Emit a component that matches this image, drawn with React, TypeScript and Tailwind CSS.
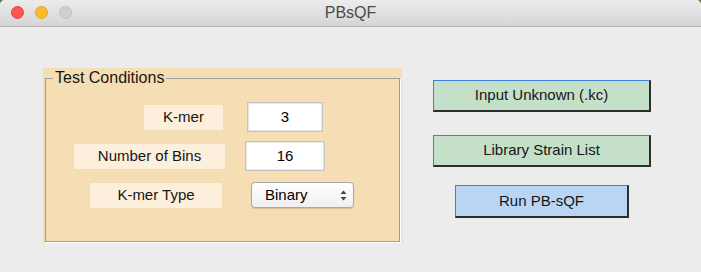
import React from "react";

const font = { fontFamily: '"Liberation Sans", Arial, sans-serif' };

function Light({ color }: { color: string }) {
  return <span className={`block w-[13px] h-[13px] rounded-full border ${color}`} />;
}

function Label({ text, w, ml }: { text: string; w: string; ml: string }) {
  return (
    <div className={`${w} ${ml} h-[25px] bg-[#fcefdc] flex items-center justify-center text-[15px] text-[#161616]`}>
      {text}
    </div>
  );
}

function Field({ value, w, ml }: { value: string; w: string; ml: string }) {
  return (
    <div
      className={`${w} ${ml} h-[30px] bg-white border border-[#c4c4c4] shadow-[inset_0_0_0_1px_#e6e6e6] flex items-center justify-center text-[15px] text-black`}
    >
      {value}
    </div>
  );
}

export default function App() {
  return (
    <div className="w-[701px] h-[272px] bg-[#5f7a4c]" style={font}>
      <div className="w-full h-full bg-[#ececec] rounded-t-[5px] flex flex-col overflow-hidden">
        {/* title bar */}
        <div className="h-[27px] shrink-0 relative bg-gradient-to-b from-[#ececec] to-[#d5d5d5] border-b border-[#b4b4b4] flex items-center justify-center">
          <div className="absolute left-[11px] top-[6px] flex gap-[11px]">
            <Light color="bg-[#fc5753] border-[#e2463f]" />
            <Light color="bg-[#fdbc2c] border-[#e0a22a]" />
            <Light color="bg-[#d0d0d0] border-[#c2c2c2]" />
          </div>
          <span className="text-[16px] text-[#4b4b4b]">PBsQF</span>
        </div>

        {/* body */}
        <div className="flex pl-[43px] pt-[41px]">
          <div className="w-[359px] h-[175px] bg-[#f5deb3] pt-[10px] px-[2px] pb-[1px]">
            <div className="relative h-full border border-[#9f9f9f] shadow-[1px_1px_0_#ffffff] pt-[23px] flex flex-col gap-[9px]">
              <span className="absolute -top-[10px] left-[7px] px-[2px] bg-[#f5deb3] text-[16px] leading-[18px] text-[#161616]">
                Test Conditions
              </span>
              <div className="h-[30px] flex items-center">
                <Label text="K-mer" w="w-[79px]" ml="ml-[98px]" />
                <Field value="3" w="w-[76px]" ml="ml-[24px]" />
              </div>
              <div className="h-[30px] flex items-center">
                <Label text="Number of Bins" w="w-[151px]" ml="ml-[28px]" />
                <Field value="16" w="w-[80px]" ml="ml-[20px]" />
              </div>
              <div className="h-[30px] flex items-center">
                <Label text="K-mer Type" w="w-[132px]" ml="ml-[44px]" />
                <div className="ml-[29px] w-[103px] h-[26px] rounded-[4px] border border-[#a8a8a8] bg-gradient-to-b from-[#ffffff] to-[#f0f0f0] shadow-[0_1px_1px_rgba(0,0,0,0.15)] flex items-center pl-[13px] pr-[6px] text-[15px] text-black">
                  <span className="flex-1">Binary</span>
                  <svg width="7" height="11" viewBox="0 0 7 11">
                    <path d="M3.5 0.5 L6.5 4 H0.5 Z" fill="#444" />
                    <path d="M3.5 10.5 L6.5 7 H0.5 Z" fill="#444" />
                  </svg>
                </div>
              </div>
            </div>
          </div>

          <div className="ml-[31px] mt-[12px] w-[218px] flex flex-col items-center text-[15px] text-[#161616]">
            <button className="w-[218px] h-[32px] bg-[#c4e0c8] border-t border-l border-[#3b7fe0] border-r-2 border-b-2 border-r-[#2d2d2d] border-b-[#2d2d2d]">
              Input Unknown (.kc)
            </button>
            <button className="mt-[23px] w-[218px] h-[32px] bg-[#c4e0c8] border-t border-l border-[#3b7fe0] border-r-2 border-b-2 border-r-[#2d2d2d] border-b-[#2d2d2d]">
              Library Strain List
            </button>
            <button className="mt-[18px] w-[174px] h-[33px] bg-[#bad5f3] border-t border-l border-[#3b7fe0] border-r-2 border-b-2 border-r-[#2d2d2d] border-b-[#2d2d2d]">
              Run PB-sQF
            </button>
          </div>
        </div>
      </div>
    </div>
  );
}
